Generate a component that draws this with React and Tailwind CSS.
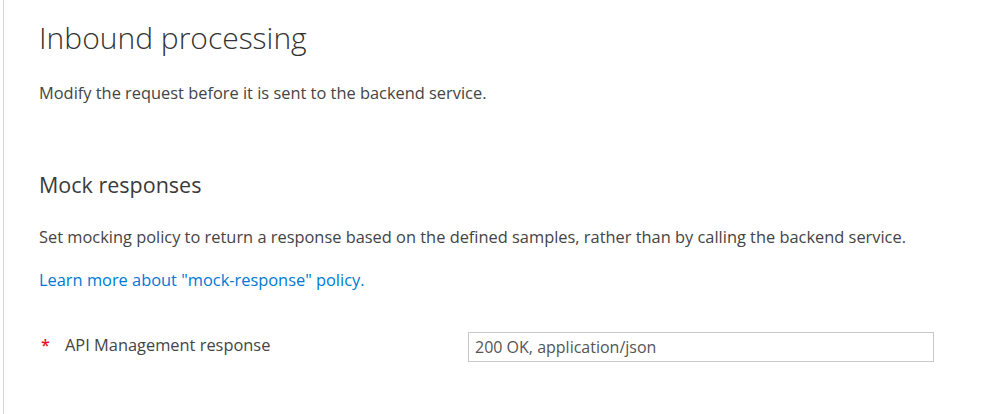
export default function App() {
  return (
    <div className="w-[989px] h-[414px] bg-white overflow-hidden flex" style={{ fontFamily: '"Open Sans", "Noto Sans", sans-serif' }}>
      <div className="w-[3px] shrink-0" />
      <div className="w-px shrink-0 bg-[#d6d6d6]" />
      <div className="flex-1 pl-[35px] pr-[55px] pt-[18px]">
        <h1 className="text-[30px] leading-[40px] font-light text-[#333333]">Inbound processing</h1>
        <p className="mt-[24px] text-[16.4px] leading-[22px] text-[#444444]">Modify the request before it is sent to the backend service.</p>
        <h2 className="mt-[66px] text-[21.5px] leading-[30px] text-[#3a3a3a]">Mock responses</h2>
        <p className="mt-[26px] text-[16.4px] leading-[22px] text-[#444444]">Set mocking policy to return a response based on the defined samples, rather than by calling the backend service.</p>
        <a className="block mt-[21px] text-[16.4px] leading-[22px] text-[#0078d4]">Learn more about "mock-response" policy.</a>
        <div className="mt-[41px] flex items-center">
          <div className="w-[429px] flex items-center -mt-[3px]">
            <span className="w-[26px] pl-[2px] text-[16px] text-[#e81123] font-semibold">*</span>
            <span className="text-[16.4px] text-[#444444]">API Management response</span>
          </div>
          <div className="w-[466px] h-[30px] border border-[#c8c8c8] flex items-center px-[6px] text-[16px] text-[#555555]">200 OK, application/json</div>
        </div>
      </div>
    </div>
  );
}
